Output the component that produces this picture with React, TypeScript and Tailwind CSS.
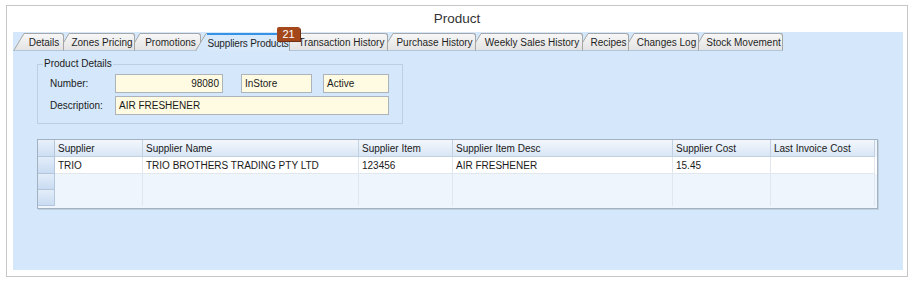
import React from 'react';

type Tab = { label: string; body: string; z: string; first?: boolean; active?: boolean };

const tabs: Tab[] = [
  { label: 'Details', body: 'w-[39px]', z: 'z-[10]', first: true },
  { label: 'Zones Pricing', body: 'w-[65px]', z: 'z-[9]' },
  { label: 'Promotions', body: 'w-[60px]', z: 'z-[8]' },
  { label: 'Suppliers Products', body: 'w-[83px]', z: 'z-[20]', active: true },
  { label: 'Transaction History', body: 'w-[92px]', z: 'z-[7]' },
  { label: 'Purchase History', body: 'w-[82px]', z: 'z-[6]' },
  { label: 'Weekly Sales History', body: 'w-[101px]', z: 'z-[5]' },
  { label: 'Recipes', body: 'w-[40px]', z: 'z-[4]' },
  { label: 'Changes Log', body: 'w-[64px]', z: 'z-[3]' },
  { label: 'Stock Movement', body: 'w-[78px]', z: 'z-[2]' },
];

const cols = [
  { h: 'Supplier', w: 'w-[88px]', v: 'TRIO' },
  { h: 'Supplier Name', w: 'w-[216px]', v: 'TRIO BROTHERS TRADING PTY LTD' },
  { h: 'Supplier Item', w: 'w-[94px]', v: '123456' },
  { h: 'Supplier Item Desc', w: 'w-[220px]', v: 'AIR FRESHENER' },
  { h: 'Supplier Cost', w: 'w-[98px]', v: '15.45' },
  { h: 'Last Invoice Cost', w: 'w-[104px]', v: '' },
];

const TabItem: React.FC<{ tab: Tab; idx: number }> = ({ tab, idx }) => {
  const gid = `tabg${idx}`;
  return (
    <div className={`relative flex items-end ${tab.z} ${tab.first ? '' : '-ml-[6px]'}`}>
      <svg width="12" height="18" className="block shrink-0">
        <defs>
          <linearGradient id={gid} x1="0" y1="0" x2="0" y2="1">
            <stop offset="0" stopColor={tab.active ? '#d7e9fb' : '#f7f7f7'} />
            <stop offset="1" stopColor={tab.active ? '#d5e8fb' : '#e3e3e3'} />
          </linearGradient>
        </defs>
        <path d="M0 18 L11 0.5 L12 0.5 L12 18 Z" fill={`url(#${gid})`} />
        <path d="M0.5 18 L11 0.5 L12 0.5" fill="none" stroke="#a6a6a6" />
        {!tab.active && <line x1="0" y1="17.5" x2="12" y2="17.5" stroke="#b4c6d9" />}
      </svg>
      <div
        className={`${tab.body} h-[18px] flex items-center justify-center whitespace-nowrap text-[10px] text-[#1f1f1f] rounded-tr-[3px] border-r border-r-[#a6a6a6] ${
          tab.active
            ? 'bg-[#d7e9fb] border-t-2 border-t-[#3592e4] pt-[1px] tracking-[-0.15px]'
            : 'bg-linear-to-b from-[#f7f7f7] to-[#e3e3e3] border-t border-t-[#a6a6a6] border-b border-b-[#b4c6d9]'
        }`}
      >
        {tab.label}
      </div>
      {tab.active && (
        <div className="absolute left-[82px] -top-[6px] w-[23px] h-[14px] bg-[#a4481b] rounded-t-[2px] shadow-[1px_1px_0_#6e3010] text-white text-[11px] leading-[14px] text-center">
          21
        </div>
      )}
    </div>
  );
};

const Field: React.FC<{ w: string; right?: boolean; children?: React.ReactNode; className?: string }> = ({ w, right, children, className }) => (
  <div
    className={`${w} h-[19px] bg-[#fffbe2] border border-[#adb3ba] px-[3px] flex items-center text-[10px] text-[#1a1a1a] ${
      right ? 'justify-end' : ''
    } ${className || ''}`}
  >
    {children}
  </div>
);

export default function App() {
  return (
    <div className="w-[916px] h-[284px] bg-white pt-[5px] pl-[6px] font-['Liberation_Sans',Arial,sans-serif]">
      <div className="w-[902px] h-[272px] border border-[#c6c6c6] bg-white">
        {/* Title */}
        <div className="h-[26px] pt-[1px] flex items-center justify-center text-[13.5px] text-[#333]">Product</div>

        {/* Tab page */}
        <div className="ml-[6px] w-[890px] h-[238px] bg-[#d5e8fb]">
          <div className="flex pt-[1px]">
            {tabs.map((t, i) => (
              <TabItem key={t.label} tab={t} idx={i} />
            ))}
          </div>

          {/* Product details group */}
          <fieldset className="ml-[24px] mt-[7px] w-[366px] border border-[#bcd0e5] pl-[12px] pb-[8px]">
            <legend className="ml-[-7px] px-[1px] text-[10px] leading-[12px] text-[#1a1a1a]">Product Details</legend>
            <div className="pt-[4px] flex items-center text-[10px] text-[#1a1a1a]">
              <span className="w-[65px]">Number:</span>
              <Field w="w-[108px]" right>98080</Field>
              <Field w="w-[71px]" className="ml-[18px]">InStore</Field>
              <Field w="w-[66px]" className="ml-[11px]">Active</Field>
            </div>
            <div className="mt-[3px] flex items-center text-[10px] text-[#1a1a1a]">
              <span className="w-[65px]">Description:</span>
              <Field w="w-[274px]">AIR FRESHENER</Field>
            </div>
          </fieldset>

          {/* Suppliers grid */}
          <div className="ml-[24px] mt-[15px] w-[841px] h-[70px] border border-[#a3b2c3] bg-[#eef5fd] shadow-[1px_1px_0_#c2cfdd] text-[10px] text-[#1a1a1a]">
            <div className="flex h-[17px]">
              <div className="w-[17px] bg-linear-to-b from-[#e8f0fa] to-[#cddff3] border-r border-b border-[#b3c6dc]" />
              {cols.map((c) => (
                <div
                  key={c.h}
                  className={`${c.w} flex items-center pl-[3px] bg-linear-to-b from-[#f3f7fc] to-[#d9e6f5] border-r border-b border-[#c2d1e1] whitespace-nowrap`}
                >
                  {c.h}
                </div>
              ))}
            </div>
            <div className="flex h-[17px] bg-white">
              <div className="w-[17px] bg-linear-to-b from-[#e3edf9] to-[#c9dcf2] border-r border-b border-[#b3c6dc]" />
              {cols.map((c) => (
                <div key={c.h} className={`${c.w} flex items-center pl-[3px] border-r border-b border-[#e1e7ee] whitespace-nowrap`}>
                  {c.v}
                </div>
              ))}
            </div>
            {[0, 1].map((r) => (
              <div key={r} className="flex h-[16px]">
                <div className="w-[17px] bg-linear-to-b from-[#e3edf9] to-[#c9dcf2] border-r border-b border-[#b3c6dc]" />
                {cols.map((c) => (
                  <div key={c.h} className={`${c.w} border-r border-[#e1e7ee]`} />
                ))}
              </div>
            ))}
          </div>
        </div>
      </div>
    </div>
  );
}
